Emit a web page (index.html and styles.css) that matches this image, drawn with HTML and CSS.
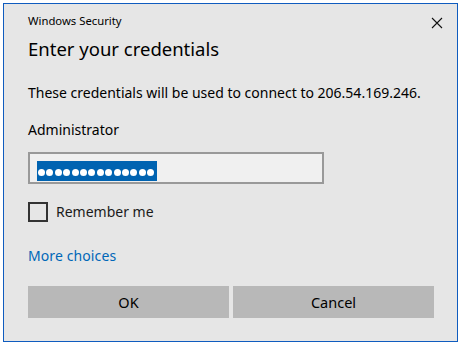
FILE: index.html
```html
<!DOCTYPE html>
<html lang="en">
<head>
    <meta charset="UTF-8">
    <title>Windows Security</title>
    <link rel="stylesheet" href="styles.css">
</head>
<body>
    <div class="dialog">
        <div class="titlebar">
            <span class="caption">Windows Security</span>
            <svg class="close" width="12" height="12" viewBox="0 0 12 12">
                <path d="M1 1 L11 11 M11 1 L1 11" stroke="#111" stroke-width="1.1" fill="none"/>
            </svg>
        </div>

        <h1>Enter your credentials</h1>
        <p class="info">These credentials will be used to connect to 206.54.169.246.</p>
        <div class="user">Administrator</div>

        <div class="password">
            <span class="selection">
                <i></i><i></i><i></i><i></i><i></i><i></i><i></i>
                <i></i><i></i><i></i><i></i><i></i><i></i><i></i>
            </span>
        </div>

        <label class="remember">
            <span class="checkbox"></span>
            <span>Remember me</span>
        </label>

        <a class="more" href="#">More choices</a>

        <div class="buttons">
            <button class="btn">OK</button>
            <button class="btn">Cancel</button>
        </div>
    </div>
</body>
</html>
```

FILE: styles.css
```css
body {
    margin: 0;
    background-color: #ffffff;
    font-family: "Noto Sans", "Open Sans", sans-serif;
    color: #000;
}
.dialog {
    box-sizing: border-box;
    width: 455px;
    height: 339px;
    margin: 3px 0 0 3px;
    border: 1px solid #0f5cbf;
    background-color: #e6e6e6;
    padding: 8px 23px 0 24px;
}
.titlebar {
    display: flex;
    justify-content: space-between;
    align-items: center;
    height: 20px;
    margin-right: -9px;
    font-size: 11.3px;
    line-height: 16px;
}
.caption {
    margin-top: -3px;
}
.close {
    margin-top: 1px;
}
h1 {
    margin: 3px 0 0 0;
    font-size: 18.5px;
    font-weight: normal;
    line-height: 28px;
}
.info {
    margin: 20px 0 0 0;
    font-size: 14px;
    line-height: 20px;
}
.user {
    margin-top: 17px;
    font-size: 14px;
    line-height: 20px;
}
.password {
    box-sizing: border-box;
    width: 296px;
    height: 32px;
    margin-top: 12px;
    border: 2px solid #999;
    background-color: #f0f0f0;
    padding: 5px 0 0 7px;
}
.selection {
    display: inline-flex;
    align-items: center;
    gap: 1.4px;
    height: 20px;
    padding: 3px 3px 0 1px;
    box-sizing: border-box;
    background-color: #0063b1;
}
.selection i {
    display: block;
    width: 7px;
    height: 7px;
    border-radius: 50%;
    background-color: #fff;
}
.remember {
    display: flex;
    align-items: center;
    gap: 8px;
    height: 20px;
    margin-top: 18px;
    font-size: 14px;
    line-height: 20px;
    color: #1a1a1a;
}
.checkbox {
    box-sizing: border-box;
    width: 20px;
    height: 20px;
    border: 2px solid #333;
}
.more {
    display: block;
    width: max-content;
    margin-top: 24px;
    font-size: 14px;
    line-height: 20px;
    letter-spacing: 0.1px;
    color: #0067b8;
    text-decoration: none;
}
.buttons {
    display: flex;
    gap: 4px;
    margin-top: 20px;
}
.btn {
    flex: 1;
    height: 32px;
    border: none;
    background-color: #b8b8b8;
    font-family: inherit;
    font-size: 14.5px;
    color: #000;
    padding: 0;
}
```
